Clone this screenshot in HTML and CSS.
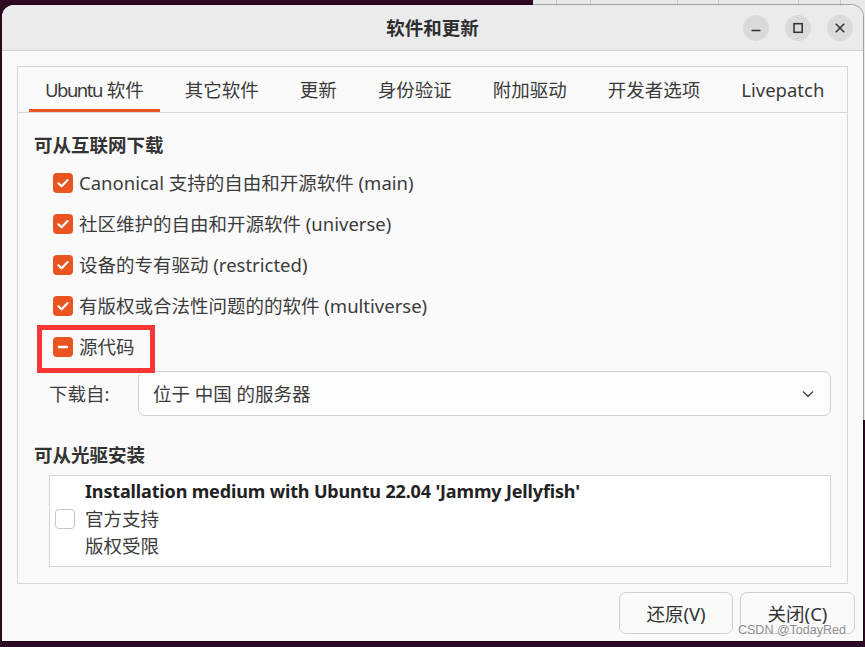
FILE: index.html
```html
<!DOCTYPE html>
<html lang="zh-CN">
<head>
<meta charset="utf-8">
<title>软件和更新</title>
<link rel="stylesheet" href="styles.css">
</head>
<body>
<div class="desktop">
  <div class="bgwin">
    <svg class="bgwin-lines" width="332" height="6" viewBox="0 0 332 6">
      <path d="M23.5 0V6M57.5 0V6M144.5 0V6M185.5 0V6M265.5 0V6M307.5 0V6" stroke="#c9c9c9" stroke-width="1" fill="none"/>
    </svg>
  </div>
  <div class="window">
    <header class="titlebar">
      <div class="title">软件和更新</div>
      <div class="controls">
        <span class="ctl"><svg width="26" height="26" viewBox="0 0 26 26"><path d="M8.5 15.5H17.5" stroke="#2e2e2e" stroke-width="1.6" fill="none"/></svg></span>
        <span class="ctl"><svg width="26" height="26" viewBox="0 0 26 26"><rect x="9" y="8.7" width="8.2" height="8.6" stroke="#2e2e2e" stroke-width="1.5" fill="none"/></svg></span>
        <span class="ctl"><svg width="26" height="26" viewBox="0 0 26 26"><path d="M8.8 8.8L17.2 17.2M17.2 8.8L8.8 17.2" stroke="#2e2e2e" stroke-width="1.5" fill="none"/></svg></span>
      </div>
    </header>
    <main class="content">
      <section class="notebook">
        <nav class="tabs">
          <div class="tab active"><span class="tight">Ubuntu</span>&nbsp;软件</div>
          <div class="tab">其它软件</div>
          <div class="tab">更新</div>
          <div class="tab">身份验证</div>
          <div class="tab">附加驱动</div>
          <div class="tab">开发者选项</div>
          <div class="tab">Livepatch</div>
        </nav>
        <div class="panel">
          <h2 class="heading">可从互联网下载</h2>
          <div class="rows">
            <div class="row"><span class="cb on"><svg width="20" height="20" viewBox="0 0 20 20"><path d="M5.4 10.3L8.6 13.3L14.6 7.1" stroke="#fff" stroke-width="2.2" stroke-linecap="round" stroke-linejoin="round" fill="none"/></svg></span><span class="label">Canonical 支持的自由和开源软件 (main)</span></div>
            <div class="row"><span class="cb on"><svg width="20" height="20" viewBox="0 0 20 20"><path d="M5.4 10.3L8.6 13.3L14.6 7.1" stroke="#fff" stroke-width="2.2" stroke-linecap="round" stroke-linejoin="round" fill="none"/></svg></span><span class="label">社区维护的自由和开源软件 (universe)</span></div>
            <div class="row"><span class="cb on"><svg width="20" height="20" viewBox="0 0 20 20"><path d="M5.4 10.3L8.6 13.3L14.6 7.1" stroke="#fff" stroke-width="2.2" stroke-linecap="round" stroke-linejoin="round" fill="none"/></svg></span><span class="label">设备的专有驱动 (restricted)</span></div>
            <div class="row"><span class="cb on"><svg width="20" height="20" viewBox="0 0 20 20"><path d="M5.4 10.3L8.6 13.3L14.6 7.1" stroke="#fff" stroke-width="2.2" stroke-linecap="round" stroke-linejoin="round" fill="none"/></svg></span><span class="label">有版权或合法性问题的的软件 (multiverse)</span></div>
            <div class="row"><span class="cb on"><svg width="20" height="20" viewBox="0 0 20 20"><path d="M6 10H14" stroke="#fff" stroke-width="2.4" stroke-linecap="round" fill="none"/></svg></span><span class="label">源代码</span><span class="highlight"></span></div>
          </div>
          <div class="download">
            <span class="dl-label">下载自:</span>
            <div class="combo">
              <span>位于 中国 的服务器</span>
              <svg width="12" height="8" viewBox="0 0 12 8"><path d="M1 1.5L6 6.3L11 1.5" stroke="#555" stroke-width="1.6" fill="none"/></svg>
            </div>
          </div>
          <h2 class="heading heading2">可从光驱安装</h2>
          <div class="listbox">
            <div class="item">
              <span class="cb off"></span>
              <div class="lines">
                <div class="strong">Installation medium with Ubuntu 22.04 'Jammy Jellyfish'</div>
                <div>官方支持</div>
                <div>版权受限</div>
              </div>
            </div>
          </div>
        </div>
      </section>
      <div class="actions">
        <button class="btn">还原(V)</button>
        <button class="btn btn-close">关闭(C)</button>
      </div>
    </main>
  </div>
  <div class="watermark">CSDN @TodayRed</div>
</div>
</body>
</html>
```
FILE: styles.css
```css
* { box-sizing: border-box; }

body {
  margin: 0;
  background: #2e0a22;
  font-family: "Noto Sans", "Noto Sans CJK SC", sans-serif;
  color: #3c3c3c;
}

.desktop {
  position: relative;
  width: 865px;
  height: 647px;
  overflow: hidden;
  background: #2e0a22;
}

.bgwin {
  position: absolute;
  left: 533px;
  top: 0;
  width: 332px;
  height: 420px;
  background: #e9e9e9;
}

.bgwin-lines { display: block; }

.window {
  position: absolute;
  left: 2px;
  top: 5px;
  width: 861px;
  height: 636px;
  background: #fafafa;
  border-radius: 12px 12px 0 0;
  box-shadow: 0 0 0 1px rgba(0, 0, 0, 0.3);
  overflow: hidden;
  display: flex;
  flex-direction: column;
}

.titlebar {
  flex: none;
  height: 46px;
  display: grid;
  grid-template-columns: 1fr auto 1fr;
  align-items: center;
  background: #ebebeb;
  border-bottom: 1px solid #d2d2d2;
}

.title {
  grid-column: 2;
  font-size: 18.5px;
  font-weight: 700;
  line-height: 24px;
  color: #2e2e2e;
}

.controls {
  grid-column: 3;
  justify-self: end;
  display: flex;
  gap: 16px;
  margin-right: 10px;
}

.ctl {
  width: 26px;
  height: 26px;
  border-radius: 50%;
  background: #dadada;
  display: flex;
}

.content {
  flex: 1;
  display: flex;
  flex-direction: column;
  padding: 15px 8px 0 15px;
}

.notebook {
  height: 518px;
  margin-right: 7px;
  border: 1px solid #d6d6d6;
  display: flex;
  flex-direction: column;
}

.tabs {
  flex: none;
  height: 46px;
  display: flex;
  gap: 9px;
  padding-left: 11px;
  border-bottom: 1px solid #d6d6d6;
}

.tab {
  display: flex;
  align-items: center;
  padding: 3px 16px 0;
  font-size: 18.5px;
  line-height: 24px;
  color: #3a3a3a;
  border-bottom: 3px solid transparent;
  white-space: nowrap;
}

.tab.active { border-bottom-color: #e95420; }

.tight { letter-spacing: -1.5px; }

.panel {
  padding: 20px 16px 0;
}

.heading {
  margin: 0;
  font-size: 18.5px;
  font-weight: 700;
  line-height: 24px;
  color: #333;
}

.rows { margin-top: 5px; }

.row {
  position: relative;
  height: 41px;
  display: flex;
  align-items: center;
  gap: 6px;
  padding-left: 19px;
  font-size: 18.5px;
  line-height: 24px;
}

.cb {
  flex: none;
  width: 20px;
  height: 20px;
  border-radius: 4px;
  display: block;
}

.cb svg { display: block; }

.cb.on { background: #e95420; }

.cb.off {
  background: #fff;
  border: 1px solid #c6c6c6;
}

.highlight {
  position: absolute;
  left: 3px;
  top: -1px;
  width: 118px;
  height: 48px;
  border: 5px solid #fd3535;
}

.download {
  display: flex;
  align-items: center;
  margin-top: 4px;
  padding-left: 15px;
  font-size: 18.5px;
  line-height: 24px;
}

.dl-label {
  flex: none;
  width: 89px;
}

.combo {
  flex: 1;
  height: 45px;
  display: flex;
  align-items: center;
  justify-content: space-between;
  padding: 0 16px 0 14px;
  background: #fdfdfd;
  border: 1px solid #cfcfcf;
  border-radius: 7px;
}

.heading2 { margin-top: 27px; }

.listbox {
  margin: 8px 0 0 15px;
  height: 92px;
  padding: 2px 0 0 5px;
  background: #fff;
  border: 1px solid #d6d6d6;
}

.item {
  display: flex;
  align-items: center;
  gap: 10px;
}

.lines {
  font-size: 18.5px;
  line-height: 27px;
}

.strong {
  font-size: 18px;
  font-weight: 700;
  letter-spacing: -0.15px;
  color: #222;
}

.actions {
  display: flex;
  justify-content: flex-end;
  gap: 7px;
  margin-top: 8px;
}

.btn {
  width: 114px;
  height: 42px;
  padding: 0;
  font-family: inherit;
  font-size: 18.5px;
  color: #333;
  background: #fafafa;
  border: 1px solid #cfcfcf;
  border-radius: 7px;
}

.btn-close { width: 115px; }

.watermark {
  position: absolute;
  left: 738px;
  top: 622px;
  font-family: "Liberation Sans", sans-serif;
  font-size: 12.5px;
  line-height: 16px;
  color: #8f8f8f;
  text-shadow: 0 0 2px #fff;
  white-space: nowrap;
}
```
